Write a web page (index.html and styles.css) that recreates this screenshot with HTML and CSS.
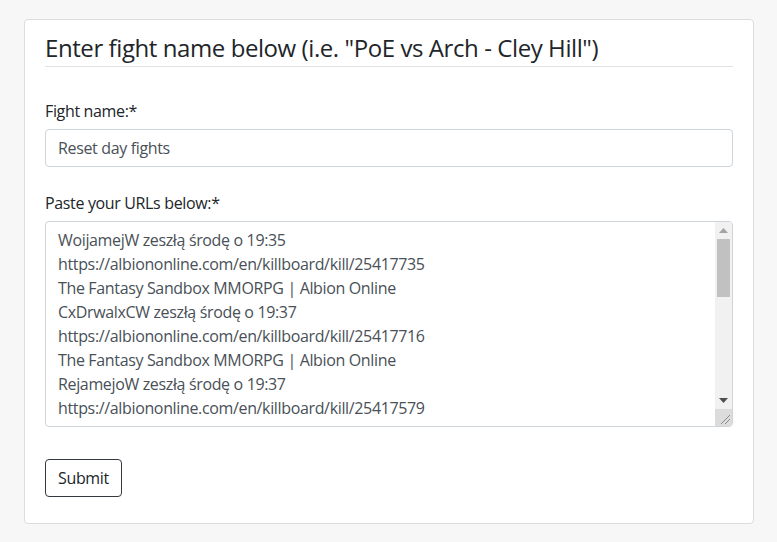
FILE: index.html
```html
<!DOCTYPE html>
<html lang="en">
<head>
<meta charset="utf-8">
<title>Fight</title>
<link rel="stylesheet" href="styles.css">
</head>
<body>
<div class="page">
  <div class="card">
    <h4 class="title">Enter fight name below (i.e. "PoE vs Arch - Cley Hill")</h4>
    <form class="form">
      <div class="group">
        <label class="label" for="name">Fight name:*</label>
        <input class="control" id="name" type="text" value="Reset day fights">
      </div>
      <div class="group">
        <label class="label" for="urls">Paste your URLs below:*</label>
        <div class="area-wrap">
          <textarea class="control area" id="urls" rows="8">WoijamejW zeszłą środę o 19:35
https://albiononline.com/en/killboard/kill/25417735
The Fantasy Sandbox MMORPG | Albion Online
CxDrwalxCW zeszłą środę o 19:37
https://albiononline.com/en/killboard/kill/25417716
The Fantasy Sandbox MMORPG | Albion Online
RejamejoW zeszłą środę o 19:37
https://albiononline.com/en/killboard/kill/25417579
The Fantasy Sandbox MMORPG | Albion Online
WoijamejW zeszłą środę o 19:38
https://albiononline.com/en/killboard/kill/25417802
The Fantasy Sandbox MMORPG | Albion Online
CxDrwalxCW zeszłą środę o 19:39
https://albiononline.com/en/killboard/kill/25417844
The Fantasy Sandbox MMORPG | Albion Online
RejamejoW zeszłą środę o 19:40
https://albiononline.com/en/killboard/kill/25417901
The Fantasy Sandbox MMORPG | Albion Online
WoijamejW zeszłą środę o 19:41
https://albiononline.com/en/killboard/kill/25417956
The Fantasy Sandbox MMORPG | Albion Online</textarea>
          <div class="sb" aria-hidden="true">
            <div class="sb-btn">
              <svg width="9" height="5" viewBox="0 0 9 5"><polygon points="0,5 4.5,0 9,5" fill="#a3a3a3"/></svg>
            </div>
            <div class="sb-track"><div class="sb-thumb"></div></div>
            <div class="sb-btn">
              <svg width="9" height="5" viewBox="0 0 9 5"><polygon points="0,0 9,0 4.5,5" fill="#505050"/></svg>
            </div>
            <div class="sb-corner">
              <svg width="17" height="17" viewBox="0 0 17 17">
                <line x1="6" y1="15" x2="15" y2="6" stroke="#8a8a8a" stroke-width="1"/>
                <line x1="10" y1="15" x2="15" y2="10" stroke="#8a8a8a" stroke-width="1"/>
              </svg>
            </div>
          </div>
        </div>
      </div>
      <button class="btn" type="button">Submit</button>
    </form>
  </div>
</div>
</body>
</html>
```

FILE: styles.css
```css
* { box-sizing: border-box; }

html, body {
  margin: 0;
  padding: 0;
  background: #f7f7f7;
}

body {
  font-family: "Open Sans", "Noto Sans", "Liberation Sans", sans-serif;
  font-size: 16px;
  line-height: 1.5;
  color: #212529;
  letter-spacing: -0.35px;
}

.page {
  padding: 19px 23px 18px 24px;
}

.card {
  background: #fff;
  border: 1px solid #dcdcdc;
  border-radius: 4px;
  padding: 13px 20px 26px 20px;
}

.title {
  margin: 0 0 32px 0;
  font-size: 24px;
  font-weight: 400;
  line-height: 29px;
  letter-spacing: -0.42px;
  padding-bottom: 4px;
  border-bottom: 1px solid #e2e2e2;
  color: #212529;
}

.form {
  display: flex;
  flex-direction: column;
  align-items: flex-start;
}

.group {
  width: 100%;
  margin-bottom: 24px;
}

.group:last-of-type {
  margin-bottom: 32px;
}

.label {
  display: block;
  margin-bottom: 6px;
  line-height: 24px;
}

.control {
  display: block;
  width: 100%;
  height: 38px;
  padding: 6px 12px;
  font-family: inherit;
  font-size: 16px;
  line-height: 24px;
  letter-spacing: -0.35px;
  color: #495057;
  background: #fff;
  border: 1px solid #ced4da;
  border-radius: 4px;
  outline: none;
}

.area-wrap {
  position: relative;
}

.area {
  height: 206px;
  padding-right: 24px;
  resize: none;
  overflow: hidden;
  white-space: pre;
}

.sb {
  position: absolute;
  top: 1px;
  right: 1px;
  bottom: 1px;
  width: 17px;
  display: flex;
  flex-direction: column;
  background: #f1f1f1;
  border-radius: 0 3px 3px 0;
  overflow: hidden;
}

.sb-btn {
  height: 17px;
  flex: none;
  display: flex;
  align-items: center;
  justify-content: center;
}

.sb-btn svg { display: block; }

.sb-track {
  flex: 1;
  padding: 0 2px;
}

.sb-thumb {
  height: 58px;
  background: #c1c1c1;
}

.sb-corner {
  height: 17px;
  flex: none;
  background: #dcdcdc;
}

.sb-corner svg { display: block; }

.btn {
  font-family: inherit;
  font-size: 16px;
  line-height: 24px;
  letter-spacing: -0.35px;
  padding: 6px 12px;
  color: #212529;
  background: #fff;
  border: 1px solid #343a40;
  border-radius: 4px;
}
```
